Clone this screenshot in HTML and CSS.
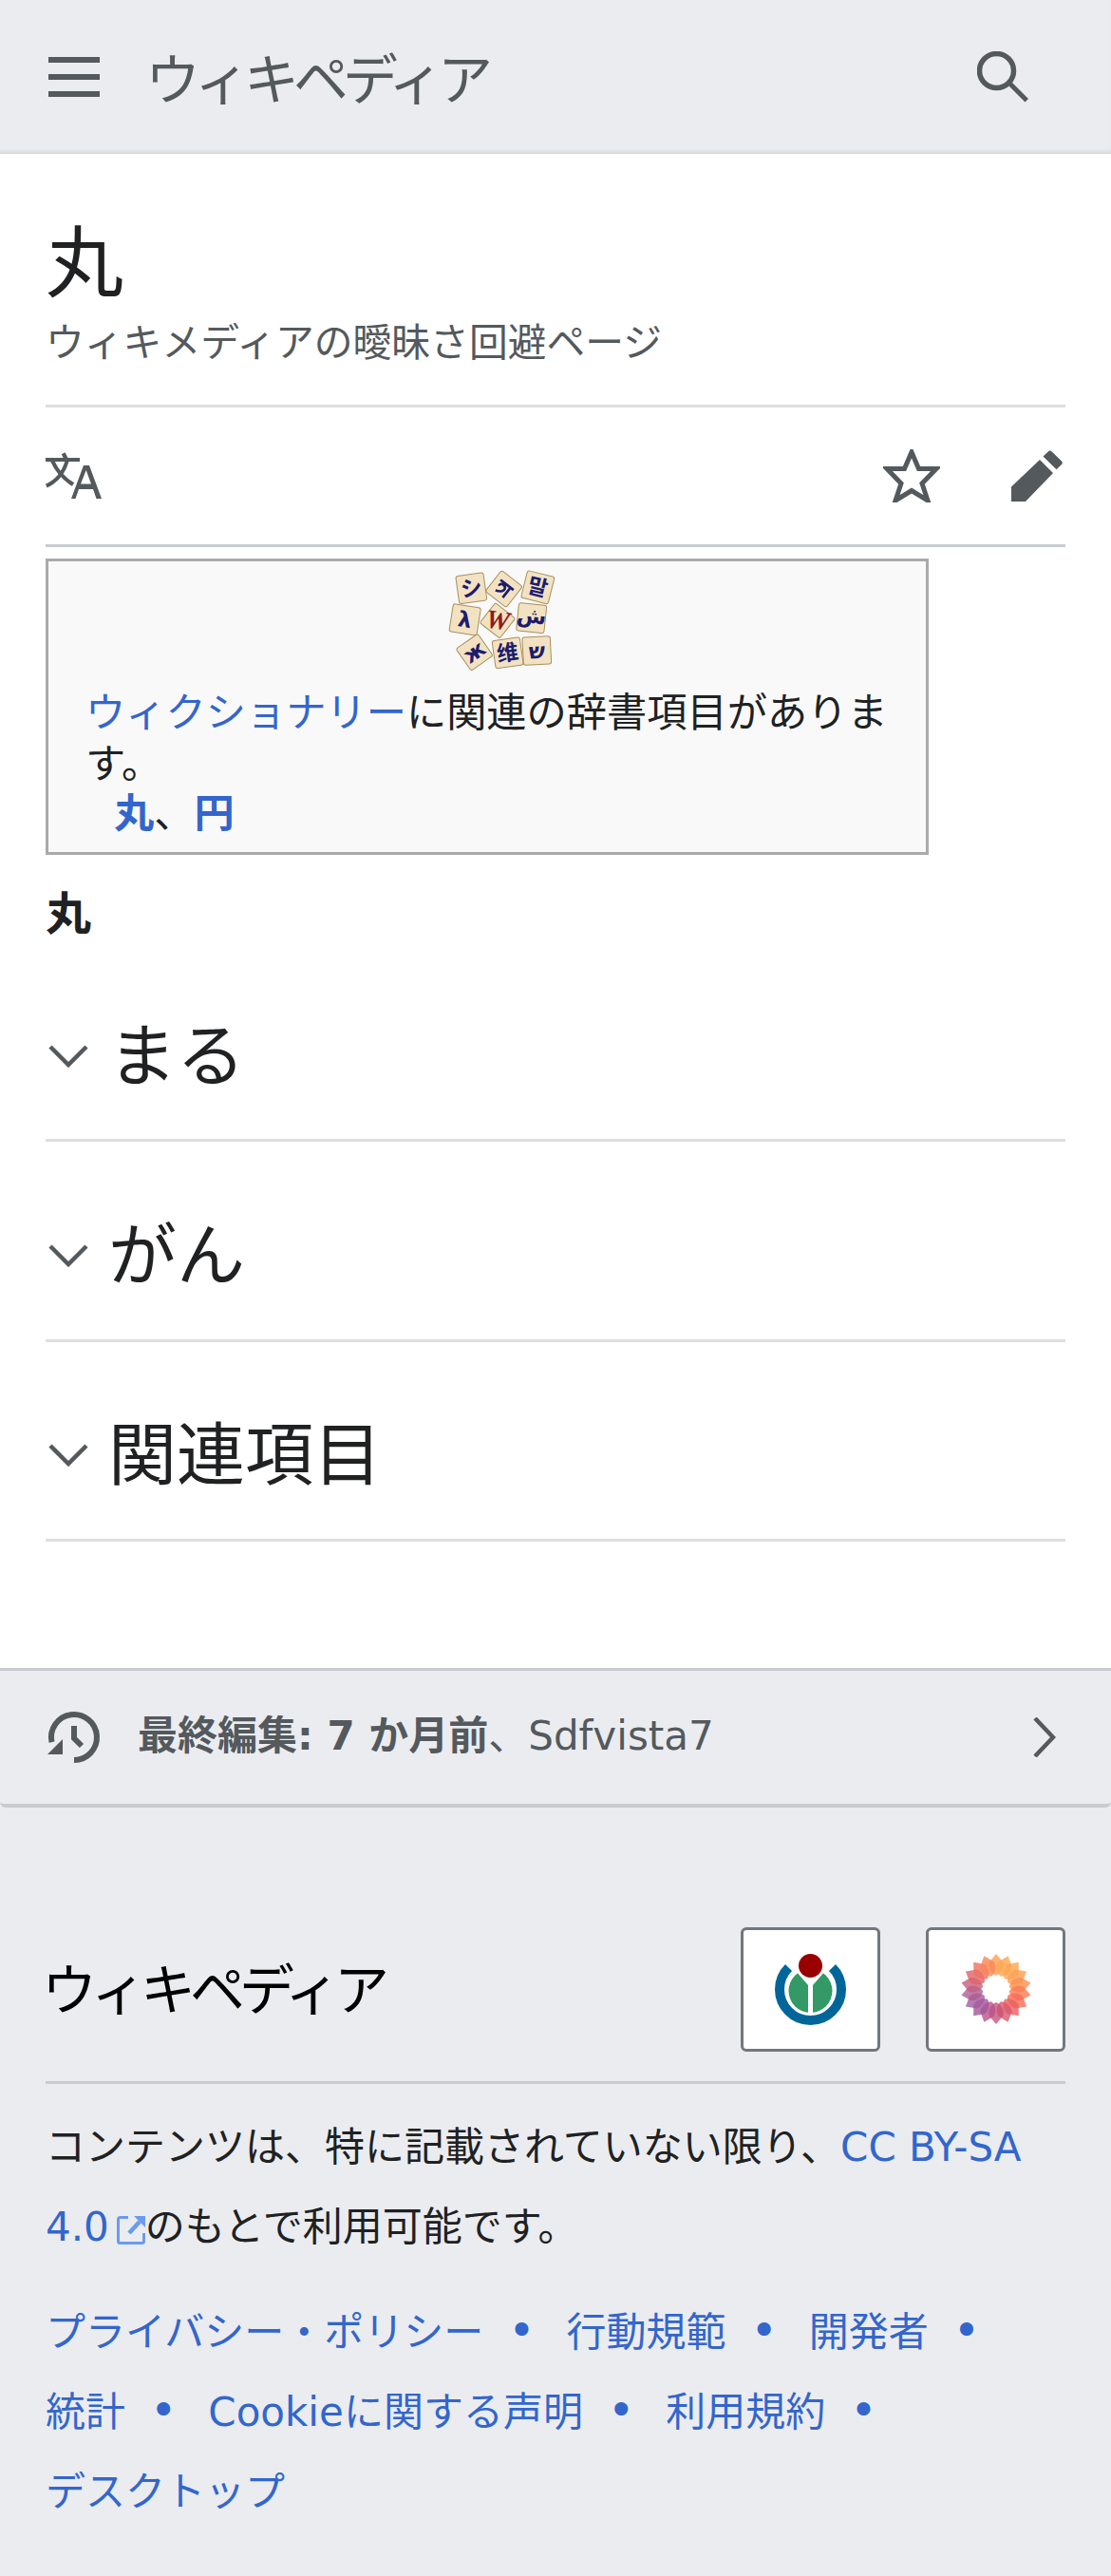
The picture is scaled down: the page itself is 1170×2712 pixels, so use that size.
FILE: index.html
```html
<!DOCTYPE html>
<html lang="ja">
<head>
<meta charset="utf-8">
<title>丸</title>
<link rel="stylesheet" href="styles.css">
</head>
<body>
<header class="topbar">
  <svg class="ico-menu" viewBox="0 0 60 60"><path d="M3 9h54v6H3zM3 27h54v6H3zM3 45h54v6H3z"/></svg>
  <span class="wordmark">ウィキペディア</span>
  <svg class="ico-search" viewBox="0 0 54 54"><circle cx="20.500" cy="20.500" r="18" fill="none" stroke="#54595d" stroke-width="5.500"/><path d="M33 36l17.500 17.500 3.500-3.500L36.500 32.500z" fill="#54595d"/></svg>
</header>
<main class="content">
  <div class="head">
    <h1 class="title">丸</h1>
    <div class="tagline">ウィキメディアの曖昧さ回避ページ</div>
  </div>
  <div class="actions">
    <svg class="ico-lang" viewBox="0 0 60 50">
      <path d="M0 8h36M18.700 1.300L22 8M7 9c5 11 12 19 22 25M22.700 9C19 22 11 31 .8 35.500" fill="none" stroke="#54595d" stroke-width="4.200"/>
      <path fill-rule="evenodd" d="M27 49l13-35h6l13 35h-5.500l-3.500-10H35l-3.500 10zM37 33.500h11L42.700 19z" fill="#54595d"/>
    </svg>
    <div class="actions-right">
      <svg class="ico-star" viewBox="0 0 60 56"><path d="M30 3l7.500 17.500H56L41 36l6 18-17-10.500L13 54l6-18L4 20.500h18.500z" fill="none" stroke="#54595d" stroke-width="5"/></svg>
      <svg class="ico-pencil" viewBox="0 0 54 54"><path d="M0 38.500L30 10l14 14L15 54H0zM33.500 6.500L39 1.200c1-1 2.500-1 3.500 0L53 11.500c1 1 1 2.500 0 3.500l-5.500 5.300z" fill="#54595d"/></svg>
    </div>
  </div>
  <aside class="wikt">
    <div class="wikt-logo">
      <svg viewBox="0 0 510 390" width="170" height="130">
        <g class="tile" transform="translate(175 88) rotate(-8)"><rect x="-44" y="-44" width="88" height="88" rx="7"/><text y="24" class="g">シ</text></g>
        <g class="tile" transform="translate(278 90) rotate(38)"><rect x="-42" y="-42" width="84" height="84" rx="7"/><path d="M-26-16H26M14-16V24M-18 2c-6-12 16-16 20-4s-10 18-20 22" class="g-line"/></g>
        <g class="tile" transform="translate(385 85) rotate(14)"><rect x="-44" y="-44" width="88" height="88" rx="7"/><text y="24" class="g">말</text></g>
        <g class="tile" transform="translate(155 187) rotate(9)"><rect x="-44" y="-44" width="88" height="88" rx="7"/><text y="24" class="g">λ</text></g>
        <g class="tile" transform="translate(258 190) rotate(38)"><rect x="-40" y="-40" width="80" height="80" rx="6"/><text y="26" class="g red" transform="rotate(-30)">W</text></g>
        <g class="tile" transform="translate(365 182) rotate(6)"><rect x="-44" y="-44" width="88" height="88" rx="7"/><text y="16" class="g">ش</text></g>
        <g class="tile" transform="translate(185 290) rotate(-35)"><rect x="-42" y="-42" width="84" height="84" rx="7"/><text y="22" class="g">ж</text></g>
        <g class="tile" transform="translate(290 292) rotate(-8)"><rect x="-44" y="-44" width="88" height="88" rx="7"/><text y="24" class="g">维</text></g>
        <g class="tile" transform="translate(382 285) rotate(-3)"><rect x="-44" y="-44" width="88" height="88" rx="7"/><text y="24" class="g">ש</text></g>
      </svg>
    </div>
    <p class="wikt-text"><a href="#">ウィクショナリー</a>に関連の辞書項目があります。</p>
    <p class="wikt-terms"><a href="#">丸</a>、<a href="#">円</a></p>
  </aside>
  <p class="lead">丸</p>
  <section class="sec"><svg class="chev" viewBox="0 0 42 24"><path d="M2 2l19 19L40 2" fill="none" stroke="#54595d" stroke-width="4.500"/></svg><h2>まる</h2></section>
  <section class="sec"><svg class="chev" viewBox="0 0 42 24"><path d="M2 2l19 19L40 2" fill="none" stroke="#54595d" stroke-width="4.500"/></svg><h2>がん</h2></section>
  <section class="sec"><svg class="chev" viewBox="0 0 42 24"><path d="M2 2l19 19L40 2" fill="none" stroke="#54595d" stroke-width="4.500"/></svg><h2>関連項目</h2></section>
</main>
<a class="lastmod" href="#">
  <svg class="ico-hist" viewBox="0 0 54 54"><path d="M27 51A24 24 0 1 0 3.500 32" fill="none" stroke="#54595d" stroke-width="6"/><path d="M-1 45h16V29z" fill="#54595d"/><path d="M27 15v13l8 8" fill="none" stroke="#54595d" stroke-width="6"/></svg>
  <span class="lastmod-text"><b>最終編集: 7 か月前</b>、Sdfvista7</span>
  <svg class="ico-next" viewBox="0 0 24 42"><path d="M2 1l19 20L2 41" fill="none" stroke="#54595d" stroke-width="4.500"/></svg>
</a>
<footer class="foot">
  <div class="foot-top">
    <span class="foot-mark">ウィキペディア</span>
    <div class="badges">
      <div class="badge">
        <svg viewBox="0 0 75 75" width="75" height="75">
          <circle cx="37.500" cy="39" r="23" fill="#396"/>
          <path d="M35 62h5V33L60 10H15l20 23z" fill="#fff"/>
          <path d="M14.500 14.500a32.500 32.500 0 1 0 46 0" fill="none" stroke="#069" stroke-width="10"/>
          <circle cx="37.500" cy="12.500" r="12.500" fill="#900"/>
        </svg>
      </div>
      <div class="badge">
        <svg viewBox="-37 -37 74 74" width="74" height="74">
          <defs><path id="petal" d="M0-37L7.500-28C9-22 5-16 0-14C-5-16-9-22-7.500-28z"/></defs>
          <g fill-opacity=".8">
            <use href="#petal" fill="#ff9f50"/>
            <use href="#petal" fill="#ffa54f" transform="rotate(20)"/>
            <use href="#petal" fill="#ffa550" transform="rotate(40)"/>
            <use href="#petal" fill="#ff9f50" transform="rotate(60)"/>
            <use href="#petal" fill="#ff9050" transform="rotate(80)"/>
            <use href="#petal" fill="#fb7a50" transform="rotate(100)"/>
            <use href="#petal" fill="#f56a55" transform="rotate(120)"/>
            <use href="#petal" fill="#ec5f5f" transform="rotate(140)"/>
            <use href="#petal" fill="#d9586c" transform="rotate(160)"/>
            <use href="#petal" fill="#c75478" transform="rotate(180)"/>
            <use href="#petal" fill="#b8548a" transform="rotate(200)"/>
            <use href="#petal" fill="#a4559b" transform="rotate(220)"/>
            <use href="#petal" fill="#a25aa0" transform="rotate(240)"/>
            <use href="#petal" fill="#ad5c94" transform="rotate(260)"/>
            <use href="#petal" fill="#c45f80" transform="rotate(280)"/>
            <use href="#petal" fill="#e0646a" transform="rotate(300)"/>
            <use href="#petal" fill="#f07060" transform="rotate(320)"/>
            <use href="#petal" fill="#fa8655" transform="rotate(340)"/>
          </g>
        </svg>
      </div>
    </div>
  </div>
  <p class="license">コンテンツは、特に記載されていない限り、<a href="#">CC BY-SA 4.0<svg class="ico-ext" viewBox="0 0 30 30"><path d="M12 1.500H3.500a2 2 0 0 0-2 2V26.500a2 2 0 0 0 2 2H26.500a2 2 0 0 0 2-2V18" fill="none" stroke="#6b9bef" stroke-width="3"/><path d="M18 0H30V12z" fill="#6b9bef"/><path d="M24 6L13 18" fill="none" stroke="#6b9bef" stroke-width="4.500"/></svg></a>のもとで利用可能です。</p>
  <ul class="links">
    <li><a href="#">プライバシー・ポリシー</a></li>
    <li><a href="#">行動規範</a></li>
    <li><a href="#">開発者</a></li>
    <li><a href="#">統計</a></li>
    <li><a href="#">Cookieに関する声明</a></li>
    <li><a href="#">利用規約</a></li>
    <li class="last"><a href="#">デスクトップ</a></li>
  </ul>
</footer>
</body>
</html>
```
FILE: styles.css
```css
* { box-sizing: border-box; }
html, body { margin: 0; padding: 0; }
body {
  background: #eaecf0;
  color: #202122;
  font-family: "DejaVu Sans", "Noto Sans CJK JP", sans-serif;
  font-size: 48px;
}
a { color: #36c; text-decoration: none; }
p { margin: 0; }

.topbar {
  height: 162px;
  display: flex;
  align-items: center;
  padding: 0 48px;
  background: #eaecf0;
  box-shadow: inset 0 -5px 4px -3px rgba(0,0,0,.10);
}
.ico-menu { width: 60px; height: 60px; fill: #54595d; flex: none; }
.wordmark {
  margin: 0 0 3px 45px;
  font-family: "Liberation Serif", "Noto Sans CJK JP", serif;
  font-size: 58px;
  letter-spacing: -6px;
  color: #54595d;
}
.ico-search { width: 54px; height: 54px; margin-left: auto; margin-right: 39px; flex: none; }

.content { background: #fff; padding: 0 48px 132.500px; }
.head { height: 267px; padding-top: 66px; border-bottom: 3px solid #dcdee0; }
.title { margin: 0; font-weight: 400; font-size: 82px; line-height: 100px; }
.tagline { font-size: 40.800px; line-height: 50px; color: #54595d; margin-top: 8px; }

.actions {
  height: 147px;
  display: flex;
  align-items: center;
  justify-content: space-between;
  border-bottom: 3px solid #c8ccd1;
}
.ico-lang { width: 60px; height: 50px; }
.actions-right { display: flex; align-items: center; gap: 75px; }
.ico-star { width: 60px; height: 56px; }
.ico-pencil { width: 54px; height: 54px; margin-right: 3px; }

.wikt {
  margin-top: 12px;
  width: 930px;
  height: 312px;
  border: 3px solid #aaa;
  background: #f9f9f9;
  padding: 0 39px;
  font-size: 42.240px;
  line-height: 54px;
}
.wikt-logo { display: flex; margin-left: 348px; height: 133px; }
.wikt-logo svg { margin-top: -1px; }
.wikt-terms { margin-left: 30px; margin-top: -2px; }
.wikt-terms a { font-weight: 700; }

.tile rect { fill: #f3e2c2; stroke: #a89060; stroke-width: 3; }
.g { font-family: "DejaVu Sans", "Noto Sans CJK JP", sans-serif; font-size: 68px; fill: #1c1c6e; text-anchor: middle; font-weight: 700; }
.g.red { fill: #8e1a1a; font-family: "Liberation Serif", serif; font-style: italic; font-size: 84px; }
.g-line { fill: none; stroke: #1c1c6e; stroke-width: 8; }

.lead { margin-top: 34px; font-weight: 700; line-height: 56px; }
.sec {
  height: 210.500px;
  padding-top: 32px;
  display: flex;
  align-items: center;
  gap: 21px;
  border-bottom: 3px solid #dcdee0;
}
.lead + .sec { height: 212px; padding-top: 35px; }
.sec h2 { margin: 0; font-weight: 400; font-size: 72px; line-height: 90px; }
.chev { width: 42px; height: 24px; margin-left: 3px; flex: none; }

.lastmod {
  height: 147px;
  display: flex;
  align-items: center;
  padding: 0 58px 0 51px;
  border-top: 3px solid #c8ccd1;
  border-bottom: 4px solid #c8ccd1;
  border-radius: 0 0 6px 6px;
  color: #54595d;
  font-size: 42px;
}
.ico-hist { width: 54px; height: 54px; flex: none; overflow: visible; }
.lastmod-text { margin: 0 0 10px 40px; }
.ico-next { width: 24px; height: 42px; margin-left: auto; flex: none; }

.foot { padding: 126px 48px 0; }
.foot-top {
  display: flex;
  align-items: center;
  justify-content: space-between;
  height: 165px;
  padding-bottom: 31px;
  border-bottom: 3px solid #c8ccd1;
}
.foot-mark {
  font-family: "Liberation Serif", "Noto Sans CJK JP", serif;
  font-size: 58px;
  letter-spacing: -6px;
  margin: 0 0 6px -4px;
  color: #000;
}
.badges { display: flex; gap: 48px; }
.badge {
  width: 147px;
  height: 131px;
  display: flex;
  align-items: center;
  justify-content: center;
  background: #fff;
  border: 3px solid #72777d;
  border-radius: 6px;
}
.license { margin-top: 25px; font-size: 42px; line-height: 84px; }
.ico-ext { width: 30px; height: 30px; margin-left: 8px; vertical-align: -4px; }
.links {
  list-style: none;
  margin: 27px 0 0;
  padding: 0;
  display: flex;
  flex-wrap: wrap;
  font-size: 42px;
  line-height: 84px;
  color: #36c;
}
.links li { margin-right: 33px; height: 84px; }
.links li::after { content: "•"; margin-left: 26px; font-size: 48px; line-height: 1; }
.links li.last::after { content: none; }
```
